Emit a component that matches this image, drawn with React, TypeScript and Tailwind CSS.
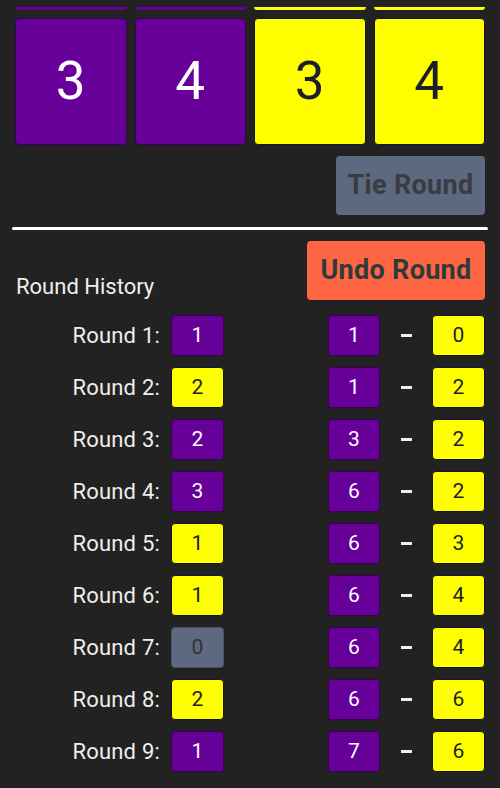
import React from 'react';

type Side = 'p' | 'y' | 't';

const SIDE_CLASS: Record<Side, string> = {
  p: 'bg-[#660099] text-white border-[#3a0058]',
  y: 'bg-[#ffff00] text-[#1e1e2a] border-[#14142a]',
  t: 'bg-[#5d6881] text-[#2f3338] border-[#4a5366]',
};

const ROUNDS: { winner: Side; pts: number; a: number; b: number }[] = [
  { winner: 'p', pts: 1, a: 1, b: 0 },
  { winner: 'y', pts: 2, a: 1, b: 2 },
  { winner: 'p', pts: 2, a: 3, b: 2 },
  { winner: 'p', pts: 3, a: 6, b: 2 },
  { winner: 'y', pts: 1, a: 6, b: 3 },
  { winner: 'y', pts: 1, a: 6, b: 4 },
  { winner: 't', pts: 0, a: 6, b: 4 },
  { winner: 'y', pts: 2, a: 6, b: 6 },
  { winner: 'p', pts: 1, a: 7, b: 6 },
];

const CARDS: { side: Side; n: number }[] = [
  { side: 'p', n: 3 },
  { side: 'p', n: 4 },
  { side: 'y', n: 3 },
  { side: 'y', n: 4 },
];

function Chip({ side, value, w }: { side: Side; value: number; w: string }) {
  return (
    <div
      className={`${w} h-[41px] rounded-[4px] border flex items-center justify-center text-[21px] ${SIDE_CLASS[side]}`}
    >
      {value}
    </div>
  );
}

export default function App() {
  return (
    <div
      className="min-h-[788px] bg-[#222222] text-[#eeeeee] overflow-hidden"
      style={{ fontFamily: 'Roboto, "Noto Sans", sans-serif' }}
    >
      {/* Partially scrolled row above */}
      <div className="pt-[7px] px-[15px] grid grid-cols-4 gap-2">
        {CARDS.map((c, i) => (
          <div
            key={i}
            className={`h-[3px] rounded-b-[4px] ${c.side === 'p' ? 'bg-[#660099]' : 'bg-[#ffff00]'}`}
          />
        ))}
      </div>

      {/* Score cards */}
      <div className="mt-[8px] px-[15px] grid grid-cols-4 gap-2">
        {CARDS.map((c, i) => (
          <div
            key={i}
            className={`h-[127px] rounded-[4px] border flex items-center justify-center text-[53px] ${SIDE_CLASS[c.side]}`}
          >
            {c.n}
          </div>
        ))}
      </div>

      <div className="px-[15px] mt-[11px] flex justify-end">
        <button className="w-[149px] h-[59px] rounded-[4px] bg-[#5d6881] text-[#393c40] font-bold text-[27px] tracking-[0.3px]">
          Tie Round
        </button>
      </div>

      <div className="mx-[12px] mt-[12px] h-[3px] rounded-full bg-white" />

      {/* History header */}
      <div className="px-[15px] mt-[11px] flex items-end justify-between">
        <div className="pl-[1px] pb-[1px] text-[22px] leading-[24px]">Round History</div>
        <button className="w-[178px] h-[59px] rounded-[4px] bg-[#ff6644] text-[#2f3b3b] font-bold text-[27px] tracking-[0.3px]">
          Undo Round
        </button>
      </div>

      {/* Rounds */}
      <div className="mt-[15px] px-[15px] flex flex-col gap-[11px]">
        {ROUNDS.map((r, i) => (
          <div key={i} className="flex items-center h-[41px]">
            <div className="w-[145px] text-right text-[22px] tracking-[0.2px]">Round {i + 1}:</div>
            <div className="ml-[11px]">
              <Chip side={r.winner} value={r.pts} w="w-[53px]" />
            </div>
            <div className="flex-1" />
            <Chip side="p" value={r.a} w="w-[52px]" />
            <div className="w-[52px] flex justify-center">
              <div className="w-[11px] h-[3px] bg-[#eeeeee]" />
            </div>
            <Chip side="y" value={r.b} w="w-[53px]" />
          </div>
        ))}
      </div>
    </div>
  );
}
